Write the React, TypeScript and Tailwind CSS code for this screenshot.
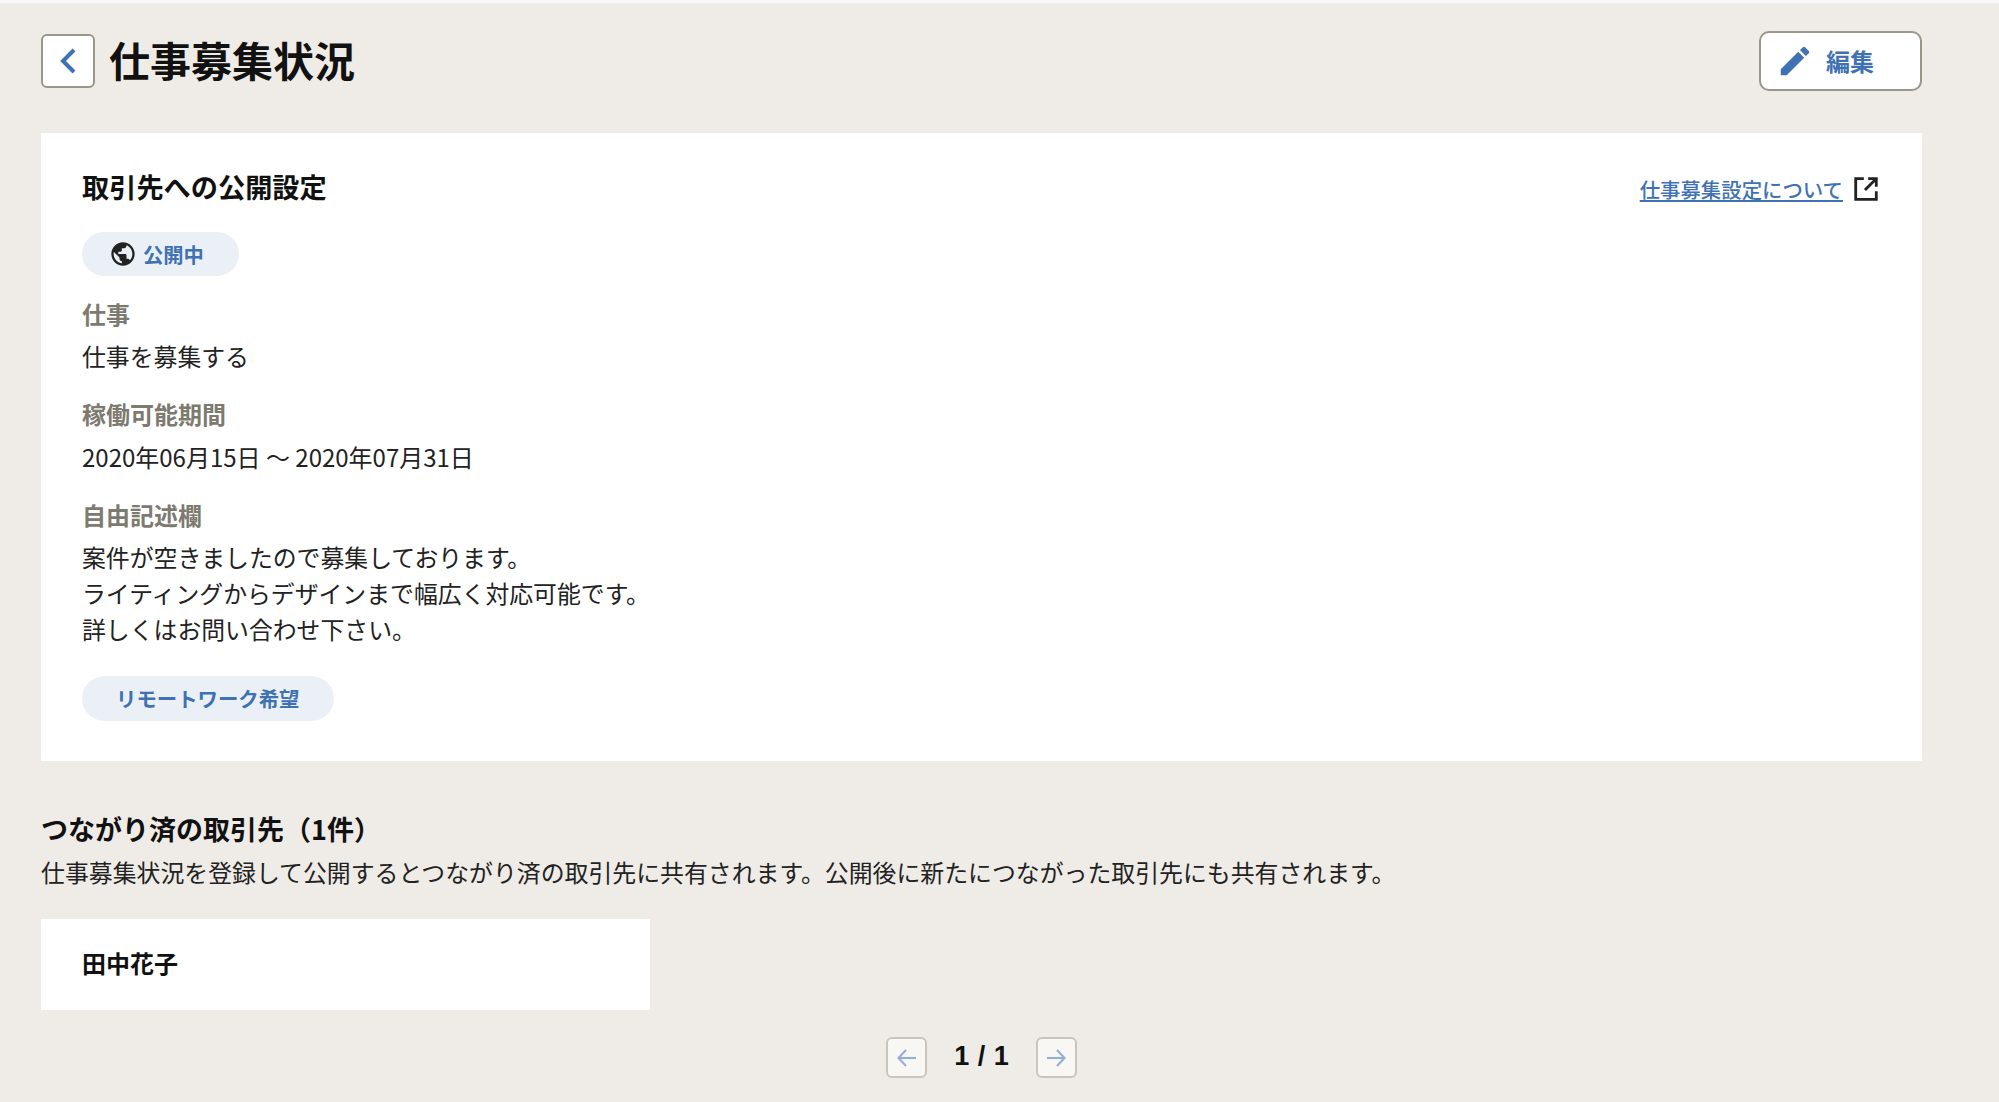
import React from "react";

const font = "font-['Noto_Sans_CJK_JP','Noto_Sans',sans-serif]";

function Label({ children, className = "" }: { children: React.ReactNode; className?: string }) {
  return <div className={`text-[24px] leading-[36px] font-bold text-[#7d7a70] ${className}`}>{children}</div>;
}

function Value({ children, className = "" }: { children: React.ReactNode; className?: string }) {
  return <div className={`text-[23.85px] leading-[36px] text-[#222] ${className}`}>{children}</div>;
}

export default function App() {
  return (
    <div className={`${font} h-[1102px] overflow-hidden bg-[#efece7] border-t-[3px] border-[#f8f8f8] pl-[41px] pr-[77px] text-[#111]`}>
      <header className="flex items-center justify-between pt-[25px] h-[130px] pb-[39px]">
        <div className="flex items-center">
          <button className="w-[54px] h-[54px] flex items-center justify-center rounded-[6px] border-[2px] border-[#9a968a] bg-white">
            <svg width="24" height="30" viewBox="0 0 24 30" fill="none">
              <path d="M18 4 L7 15 L18 26" stroke="#3f72b3" strokeWidth="4" />
            </svg>
          </button>
          <h1 className="ml-[14px] mb-[5px] text-[41px] leading-[54px] font-bold text-[#111]">仕事募集状況</h1>
        </div>
        <button className="w-[163px] h-[60px] flex items-center rounded-[10px] border-[2px] border-[#9a968a] bg-white pl-[15px]">
          <svg width="38" height="38" viewBox="0 0 24 24" fill="#3f72b3">
            <path d="M3 17.25V21h3.75L17.81 9.94l-3.75-3.75L3 17.25zM20.71 7.04a1 1 0 0 0 0-1.41l-2.34-2.34a1 1 0 0 0-1.41 0l-1.83 1.83 3.75 3.75 1.83-1.83z" />
          </svg>
          <span className="ml-[12px] text-[24px] leading-[32px] font-bold text-[#3f72b3]">編集</span>
        </button>
      </header>

      <section className="bg-white h-[628px] px-[41px] pt-[33px]">
        <div className="flex items-start justify-between">
          <h2 className="text-[27.2px] leading-[40px] font-bold text-[#111]">取引先への公開設定</h2>
          <a className="flex items-center mt-[8px] pr-[2px]">
            <span className="text-[20.4px] leading-[30px] text-[#3f72b3] underline font-medium">仕事募集設定について</span>
            <svg className="ml-[10px]" width="26" height="26" viewBox="0 0 24 24" fill="none" stroke="#222" strokeWidth="2.6">
              <path d="M10 2.5H2.5V21.5H21.5V14" />
              <path d="M14 2.5H21.5V10" />
              <path d="M21 3L11 13" />
            </svg>
          </a>
        </div>
        <div className="mt-[26px] inline-flex items-center h-[44px] rounded-full bg-[#ebf0f7] pl-[27px] pr-[35px]">
          <svg width="28" height="28" viewBox="0 0 24 24" fill="#222">
            <path d="M12 2C6.48 2 2 6.48 2 12s4.48 10 10 10 10-4.48 10-10S17.52 2 12 2zm-1 17.93c-3.95-.49-7-3.85-7-7.93 0-.62.08-1.21.21-1.79L9 15v1c0 1.1.9 2 2 2v1.93zm6.9-2.54c-.26-.81-1-1.39-1.9-1.39h-1v-3c0-.55-.45-1-1-1H8v-2h2c.55 0 1-.45 1-1V7h2c1.1 0 2-.9 2-2v-.41c2.93 1.19 5 4.06 5 7.41 0 2.08-.8 3.97-2.1 5.39z" />
          </svg>
          <span className="ml-[6px] text-[20.3px] leading-[28px] font-bold text-[#3f72b3]">公開中</span>
        </div>
        <Label className="mt-[20px]">仕事</Label>
        <Value className="mt-[6px]">仕事を募集する</Value>
        <Label className="mt-[22px]">稼働可能期間</Label>
        <Value className="mt-[7px] text-[24px]">2020年06月15日 〜 2020年07月31日</Value>
        <Label className="mt-[22px]">自由記述欄</Label>
        <div className="mt-[6px]">
          <Value>案件が空きましたので募集しております。</Value>
          <Value>ライティングからデザインまで幅広く対応可能です。</Value>
          <Value>詳しくはお問い合わせ下さい。</Value>
        </div>
        <div className="mt-[29px] inline-flex items-center h-[45px] rounded-full bg-[#ebf0f7] px-[34px]">
          <span className="text-[20.4px] leading-[28px] font-bold text-[#3f72b3] -mt-[1px]">リモートワーク希望</span>
        </div>
      </section>

      <section className="mt-[48px]">
        <h2 className="text-[27px] leading-[40px] font-bold text-[#111]">つながり済の取引先（1件）</h2>
        <p className="mt-[5px] text-[23.88px] leading-[36px] text-[#222]">
          仕事募集状況を登録して公開するとつながり済の取引先に共有されます。公開後に新たにつながった取引先にも共有されます。
        </p>
        <div className="mt-[29px] w-[609px] h-[91px] flex items-center bg-white px-[41px]">
          <span className="text-[24px] leading-[36px] font-bold text-[#111] -mt-[4px]">田中花子</span>
        </div>
      </section>

      <nav className="mt-[27px] flex items-center justify-center">
        <button className="w-[41px] h-[41px] flex items-center justify-center rounded-[6px] border-[2px] border-[#c9c5bc] bg-[#f8f7f4]">
          <svg width="22" height="22" viewBox="0 0 22 22" fill="none" stroke="#92afd6" strokeWidth="2.1">
            <path d="M20 11H3" />
            <path d="M10 3L2.5 11L10 19" />
          </svg>
        </button>
        <span className="mx-[27px] mb-[4px] text-[27px] leading-[36px] font-bold text-[#111] font-['Liberation_Sans',sans-serif] [word-spacing:1px]">1 / 1</span>
        <button className="w-[41px] h-[41px] flex items-center justify-center rounded-[6px] border-[2px] border-[#c9c5bc] bg-[#f8f7f4]">
          <svg width="22" height="22" viewBox="0 0 22 22" fill="none" stroke="#92afd6" strokeWidth="2.1">
            <path d="M2 11H19" />
            <path d="M12 3L19.5 11L12 19" />
          </svg>
        </button>
      </nav>
    </div>
  );
}
